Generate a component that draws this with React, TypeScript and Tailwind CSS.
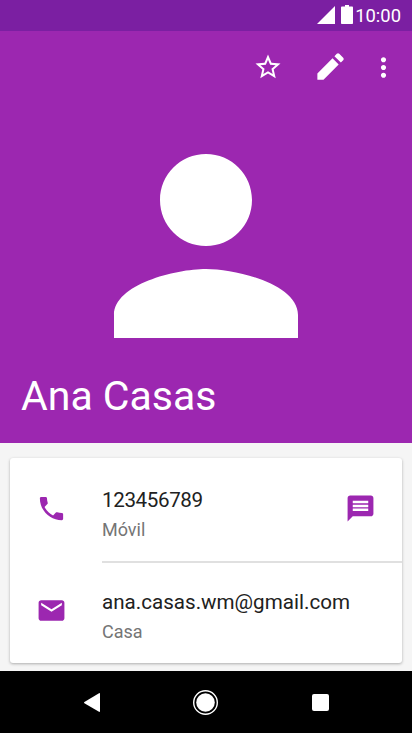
import type { ReactNode } from "react";

type IconProps = {
  path: string;
  className: string;
};

const icons = {
  star: "M22 9.24l-7.19-.62L12 2 9.19 8.63 2 9.24l5.46 4.73L5.82 21 12 17.27 18.18 21l-1.63-7.03L22 9.24zM12 15.4l-3.76 2.27 1-4.28-3.32-2.88 4.38-.38L12 6.1l1.71 4.04 4.38.38-3.32 2.88 1 4.28L12 15.4z",
  edit: "M3 16.8V21h4.2L17.6 10.600 13.400 6.400 3 16.800zM20.700 7.700a1.200 1.200 0 0 0 0-1.700l-2.700-2.700a1.200 1.200 0 0 0-1.700 0L14.700 4.900 19.100 9.300z",
  more: "M12 8c1.1 0 2-.9 2-2s-.9-2-2-2-2 .9-2 2 .9 2 2 2zm0 2c-1.1 0-2 .9-2 2s.9 2 2 2 2-.9 2-2-.9-2-2-2zm0 6c-1.1 0-2 .9-2 2s.9 2 2 2 2-.9 2-2-.9-2-2-2z",
  person:
    "M12 12c2.21 0 4-1.79 4-4s-1.79-4-4-4-4 1.79-4 4 1.79 4 4 4zm0 2c-2.67 0-8 1.34-8 4v2h16v-2c0-2.66-5.33-4-8-4z",
  phone:
    "M6.62 10.79c1.44 2.83 3.76 5.14 6.59 6.59l2.2-2.2c.27-.27.67-.36 1.02-.24 1.12.37 2.33.57 3.57.57.55 0 1 .45 1 1V20c0 .55-.45 1-1 1-9.39 0-17-7.61-17-17 0-.55.45-1 1-1h3.5c.55 0 1 .45 1 1 0 1.25.2 2.45.57 3.57.11.35.03.74-.25 1.02l-2.2 2.2z",
  message:
    "M20 2H4c-1.1 0-1.99.9-1.99 2L2 22l4-4h14c1.1 0 2-.9 2-2V4c0-1.1-.9-2-2-2zm-2 12H6v-2h12v2zm0-3H6V9h12v2zm0-3H6V6h12v2z",
  mail: "M20 4H4c-1.1 0-1.99.9-1.99 2L2 18c0 1.1.9 2 2 2h16c1.1 0 2-.9 2-2V6c0-1.1-.9-2-2-2zm0 4l-8 5-8-5V6l8 5 8-5v2z",
};

const Icon = ({ path, className }: IconProps) => (
  <svg viewBox="0 0 24 24" fill="currentColor" className={className}>
    <path d={path} />
  </svg>
);

const StatusBar = () => (
  <div className="flex h-[31px] items-start justify-end bg-[#7b1fa2] pr-[11px] text-white">
    <svg viewBox="0 0 18 18" fill="currentColor" className="mt-[6px] size-[18px]">
      <path d="M18 0v18H0z" />
    </svg>
    <svg
      viewBox="0 0 12 19"
      fill="currentColor"
      className="mt-[5px] ml-[6px] h-[19px] w-[12px]"
    >
      <path d="M4 0h4v1.6h3.2c.5 0 .8.3.8.8v15.8c0 .5-.3.8-.8.8H.8c-.5 0-.8-.3-.8-.8V2.4c0-.5.3-.8.8-.8H4z" />
    </svg>
    <span className="mt-[6px] ml-[2px] text-[18.4px] leading-[20px]">10:00</span>
  </div>
);

type RowProps = {
  icon: string;
  title: ReactNode;
  label: string;
  children?: ReactNode;
};

const ContactRow = ({ icon, title, label, children }: RowProps) => (
  <div className="flex items-start">
    <Icon path={icon} className="mt-[7px] ml-[26px] size-[31px] text-[#9c27b0]" />
    <div className="ml-[35px] flex-1">
      <h2 className="text-[20.6px] leading-[28px] text-[#212121]">{title}</h2>
      <p className="mt-[4px] text-[18px] leading-[24px] text-[#757575]">{label}</p>
    </div>
    {children}
  </div>
);

const NavBar = () => (
  <div className="flex h-[62px] items-center bg-black text-white">
    <button className="ml-[84px]">
      <svg viewBox="0 0 16 19" fill="currentColor" className="h-[19px] w-[16px]">
        <path d="M15 .2c.6-.3 1 0 1 .6v17.4c0 .6-.4.9-1 .6L.4 10.2c-.5-.3-.5-1 0-1.3z" />
      </svg>
    </button>
    <button className="ml-[93px]">
      <svg viewBox="0 0 25 25" className="size-[25px]">
        <circle cx="12.5" cy="12.5" r="11.8" fill="none" stroke="currentColor" strokeWidth="1.4" />
        <circle cx="12.5" cy="12.5" r="9.3" fill="currentColor" />
      </svg>
    </button>
    <button className="ml-[94px] size-[17px] rounded-[2px] bg-white" />
  </div>
);

const App = () => {
  return (
    <div className="flex h-[733px] w-[412px] flex-col overflow-hidden bg-[#f5f5f5] font-[Roboto,sans-serif]">
      <StatusBar />

      <header className="flex h-[412px] flex-col bg-[#9c27b0] text-white">
        <div className="flex h-[77px] items-start pt-[21px]">
          <button className="ml-[253px]">
            <Icon path={icons.star} className="size-[30px]" />
          </button>
          <button className="ml-[30px]">
            <Icon path={icons.edit} className="-mt-[3px] size-[35px]" />
          </button>
          <button className="ml-[20px]">
            <Icon path={icons.more} className="size-[31px]" />
          </button>
        </div>
        <Icon path={icons.person} className="mx-auto size-[276px] shrink-0" />
        <h1 className="-mt-[13px] ml-[21px] text-[41px] leading-[50px]">Ana Casas</h1>
      </header>

      <main className="h-[228px] px-[10px] pt-[15px]">
        <div className="h-[205px] rounded-[3px] bg-white shadow-[0_1px_3px_rgba(0,0,0,0.3)]">
          <div className="h-[103px] pt-[28px]">
            <ContactRow
              icon={icons.phone}
              title={<span className="tracking-[-0.38px]">123456789</span>}
              label="Móvil"
            >
              <button className="mt-[7px] mr-[26px] text-[#9c27b0]">
                <Icon path={icons.message} className="size-[31px]" />
              </button>
            </ContactRow>
          </div>
          <div className="ml-[92px] border-t-2 border-[#e0e0e0]" />
          <div className="pt-[25px]">
            <ContactRow icon={icons.mail} title="ana.casas.wm@gmail.com" label="Casa" />
          </div>
        </div>
      </main>

      <NavBar />
    </div>
  );
};

export default App;
